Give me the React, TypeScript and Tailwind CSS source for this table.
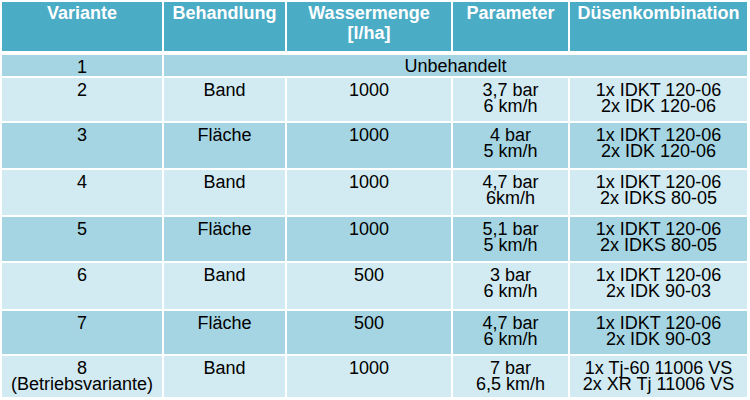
import React from "react";

type Row = { v: string[]; b: string; w: string; p: string[]; d: string[]; dark: boolean };

const rows: Row[] = [
  { v: ["2"], b: "Band", w: "1000", p: ["3,7 bar", "6 km/h"], d: ["1x IDKT 120-06", "2x IDK 120-06"], dark: false },
  { v: ["3"], b: "Fläche", w: "1000", p: ["4 bar", "5 km/h"], d: ["1x IDKT 120-06", "2x IDK 120-06"], dark: true },
  { v: ["4"], b: "Band", w: "1000", p: ["4,7 bar", "6km/h"], d: ["1x IDKT 120-06", "2x IDKS 80-05"], dark: false },
  { v: ["5"], b: "Fläche", w: "1000", p: ["5,1 bar", "5 km/h"], d: ["1x IDKT 120-06", "2x IDKS 80-05"], dark: true },
  { v: ["6"], b: "Band", w: "500", p: ["3 bar", "6 km/h"], d: ["1x IDKT 120-06", "2x IDK 90-03"], dark: false },
  { v: ["7"], b: "Fläche", w: "500", p: ["4,7 bar", "6 km/h"], d: ["1x IDKT 120-06", "2x IDK 90-03"], dark: true },
  { v: ["8", "(Betriebsvariante)"], b: "Band", w: "1000", p: ["7 bar", "6,5 km/h"], d: ["1x Tj-60 11006 VS", "2x XR Tj 11006 VS"], dark: false },
];

function Cell({ lines, dark }: { lines: string[]; dark: boolean }) {
  return (
    <div className={`${dark ? "bg-[#a5d5e2]" : "bg-[#d2eaf1]"} pt-[4px] text-center leading-[16px]`}>
      {lines.map((l, i) => (
        <div key={i}>{l}</div>
      ))}
    </div>
  );
}

function Head({ children }: { children: React.ReactNode }) {
  return (
    <div className="bg-[#4bacc6] mb-[2px] pt-[1px] text-center font-bold text-white leading-[20px]">
      {children}
    </div>
  );
}

export default function App() {
  return (
    <div
      className="w-[750px] h-[400px] bg-white p-[2px] overflow-hidden text-[18px] text-black"
      style={{ fontFamily: '"Liberation Sans", Arial, sans-serif' }}
    >
      <div className="grid grid-cols-[160px_121px_164px_115px_177px] grid-rows-[51px_21px_43px_45px_45px_44px_46px_43px_41px] gap-[2px]">
        <Head>Variante</Head>
        <Head>Behandlung</Head>
        <Head>
          Wassermenge
          <br />
          [l/ha]
        </Head>
        <Head>Parameter</Head>
        <Head>Düsenkombination</Head>

        <Cell lines={["1"]} dark={true} />
        <div className="col-span-4 bg-[#a5d5e2] pt-[3px] text-center leading-[16px]">Unbehandelt</div>

        {rows.map((r, i) => (
          <React.Fragment key={i}>
            <Cell lines={r.v} dark={r.dark} />
            <Cell lines={[r.b]} dark={r.dark} />
            <Cell lines={[r.w]} dark={r.dark} />
            <Cell lines={r.p} dark={r.dark} />
            <Cell lines={r.d} dark={r.dark} />
          </React.Fragment>
        ))}
      </div>
    </div>
  );
}
